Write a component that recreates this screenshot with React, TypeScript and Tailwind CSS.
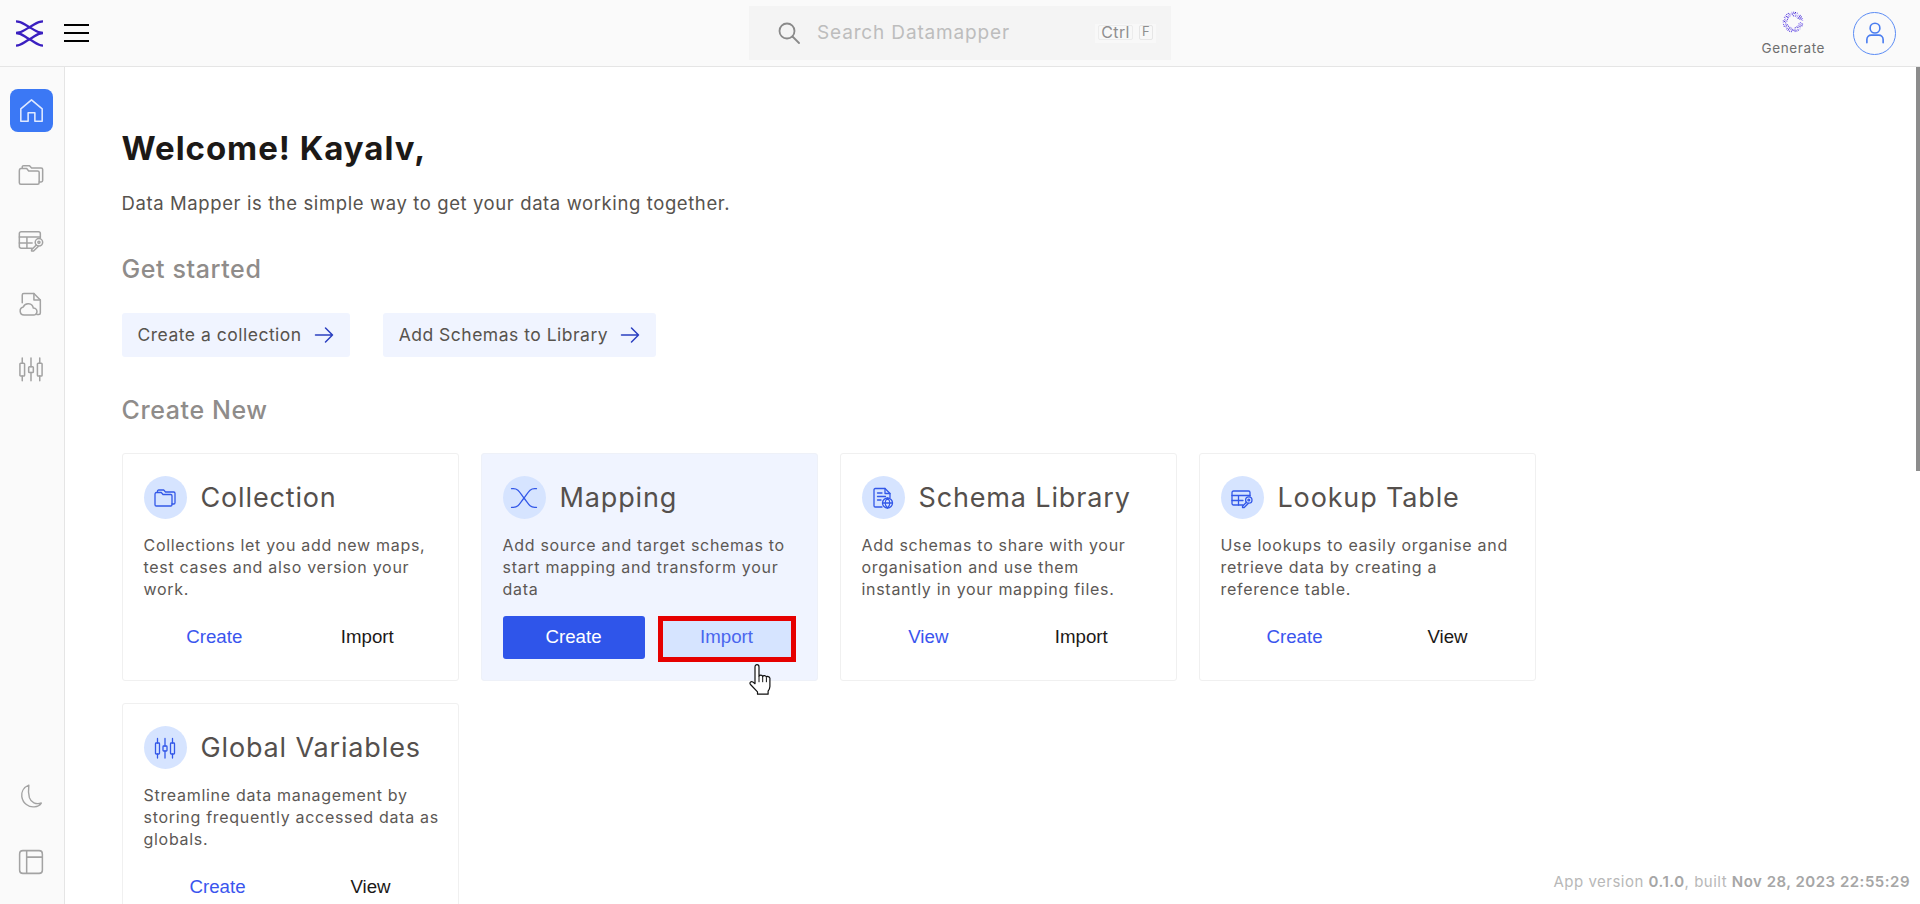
import type { ReactNode } from "react"

type IconProps = { className?: string }

function Svg({ className, children, sw = 1.3 }: IconProps & { children: ReactNode; sw?: number }) {
  return (
    <svg viewBox="0 0 24 24" fill="none" stroke="currentColor" strokeWidth={sw} strokeLinecap="round" strokeLinejoin="round" className={className} aria-hidden>
      {children}
    </svg>
  )
}

const FolderIcon = ({ className }: IconProps) => (
  <Svg className={className}>
    <path d="M2 8.500v10.200c0 .7.5 1.300 1.300 1.300h14.400c.8 0 1.300-.6 1.300-1.300V9.700c0-.7-.5-1.200-1.300-1.200H10L8.300 6.500H3.300C2.500 6.500 2 7.300 2 8.500Z" />
    <path d="M4.500 6.300V5.200c0-.7.5-1.200 1.200-1.200h5l1.800 2h8.200c.8 0 1.300.5 1.300 1.200v9.600c0 .7-.5 1.200-1.300 1.200H19" />
  </Svg>
)

const TableKeyIcon = ({ className }: IconProps) => (
  <Svg className={className}>
    <path d="M13 19H3.500C2.700 19 2 18.300 2 17.500v-11C2 5.700 2.700 5 3.500 5h15c.8 0 1.500.7 1.500 1.500V10" />
    <path d="M2 9.500h18M2 14.500h11M8.500 9.500V19" />
    <circle cx="18.800" cy="14" r="3.200" />
    <circle cx="18.800" cy="14" r="0.900" />
    <path d="M16.500 16.300 12.500 20.300v1.200h1.700l4-4" />
  </Svg>
)

const FileCloudIcon = ({ className }: IconProps) => (
  <Svg className={className}>
    <path d="M4.500 11V4.300C4.500 3.500 5 3 5.800 3h8.700l5.500 5.500v11.200c0 .8-.5 1.300-1.300 1.300H17" />
    <path d="M14.500 3v5.500H20" />
    <path d="M6.500 21.500H6a3.500 3.500 0 0 1-.6-6.900 4.500 4.500 0 0 1 8.600.9 3 3 0 0 1 .2 6H6.500Z" />
  </Svg>
)

const SlidersIcon = ({ className }: IconProps) => (
  <Svg className={className}>
    <rect x="2.500" y="7" width="4" height="11" rx="0.700" />
    <path d="M4.500 2.500V7M4.500 18v4" />
    <rect x="10" y="10" width="4" height="5" rx="0.700" />
    <path d="M12 2.500V10M12 15v7" />
    <rect x="17.500" y="7" width="4" height="11" rx="0.700" />
    <path d="M19.500 2.500V7M19.500 18v4" />
  </Svg>
)

const MappingIcon = ({ className }: IconProps) => (
  <Svg className={className} sw={1}>
    <path d="M2 4.500h1.500c4 0 5 3 8.500 7.500s4.500 7.500 8.500 7.500H22" />
    <path d="M2 19.500h1.500c4 0 5-3 8.500-7.500s4.500-7.500 8.500-7.500H22" />
  </Svg>
)

const SchemaIcon = ({ className }: IconProps) => (
  <Svg className={className}>
    <path d="M11 21H4.300C3.500 21 3 20.500 3 19.700V3.800C3 3 3.500 2.500 4.300 2.500h9.700l5 5v4" />
    <path d="M14 2.500v5h5M6.500 7h4.500M6.500 10.500h8M6.500 14h3.500" />
    <circle cx="16.500" cy="17" r="5" />
    <path d="M11.500 17h10M16.500 12c-3 3-3 7 0 10M16.500 12c3 3 3 7 0 10" />
  </Svg>
)

const dotColors = ["#3a22d0", "#6a4cf0", "#a999f5", "#5136e0"]

// Rings of small squares, every fifth one left out, so it reads as the speckled loader.
function GenerateIcon() {
  const dots = [6.200, 7.400, 8.600, 9.800].flatMap((r, ring) =>
    Array.from({ length: Math.round(r * 3.400) }, (_, i) => {
      const a = ((i + ring * 0.370) / Math.round(r * 3.400)) * Math.PI * 2
      return { key: `${ring}-${i}`, x: 10.500 + r * Math.cos(a), y: 10.500 + r * Math.sin(a), skip: (i + ring) % 5 === 0, fill: dotColors[(i + ring) % 4] }
    }),
  )
  return (
    <svg viewBox="0 0 22 22" className="h-[22px] w-[22px]" aria-hidden>
      {dots
        .filter((d) => !d.skip)
        .map((d) => (
          <rect key={d.key} x={d.x} y={d.y} width="1" height="1" fill={d.fill} />
        ))}
    </svg>
  )
}

function HandCursor() {
  return (
    <svg viewBox="0 0 28 34" className="absolute left-[85px] top-[41px] h-[35px] w-[28px]" aria-hidden>
      <path
        d="M9 2.200c1.300 0 2 1 2 2.200v9.300c.2-1.300 3.400-1.500 3.700.4.400-1.500 3.400-1.400 3.700.6.600-1.200 3.300-.9 3.500 1.100v8.200c0 2-.8 3.200-1.800 4.700v3H9.500v-2.300L2.500 22c-1.400-1.600.5-3.800 2.300-2.600l2.200 1.800V4.400C7 3.200 7.700 2.200 9 2.200Z"
        fill="#fff"
        stroke="#111"
        strokeWidth="1.200"
        strokeLinejoin="round"
      />
      <path d="M11 13.700v6M14.700 14.100v5.600M18.400 15.100v4.600" stroke="#111" strokeWidth="1" fill="none" />
    </svg>
  )
}

type Card = {
  title: string
  lines: string[]
  icon: ReactNode
  first: string
  second: string
  active?: boolean
}

const cardIcon = "h-[24px] w-[24px]"

const cards: Card[] = [
  {
    title: "Collection",
    lines: ["Collections let you add new maps,", "test cases and also version your", "work."],
    icon: <FolderIcon className={cardIcon} />,
    first: "Create",
    second: "Import",
  },
  {
    title: "Mapping",
    lines: ["Add source and target schemas to", "start mapping and transform your", "data"],
    icon: <MappingIcon className="h-[30px] w-[30px]" />,
    first: "Create",
    second: "Import",
    active: true,
  },
  {
    title: "Schema Library",
    lines: ["Add schemas to share with your", "organisation and use them", "instantly in your mapping files."],
    icon: <SchemaIcon className={cardIcon} />,
    first: "View",
    second: "Import",
  },
  {
    title: "Lookup Table",
    lines: ["Use lookups to easily organise and", "retrieve data by creating a", "reference table."],
    icon: <TableKeyIcon className={cardIcon} />,
    first: "Create",
    second: "View",
  },
  {
    title: "Global Variables",
    lines: ["Streamline data management by", "storing frequently accessed data as", "globals."],
    icon: <SlidersIcon className={cardIcon} />,
    first: "Create",
    second: "View",
  },
]

function FeatureCard({ card }: { card: Card }) {
  return (
    <div className={`rounded-[3px] border px-[21px] pb-[21px] pt-[22px] ${card.active ? "border-[#eef1f8] bg-[#f0f4ff]" : "border-[#f0f0f0] bg-white"}`}>
      <div className="flex items-center gap-[14px]">
        <span className="flex h-[43px] w-[43px] shrink-0 items-center justify-center rounded-full bg-[#d6e4ff] text-[#3358e8]">{card.icon}</span>
        <span className="text-[27px] leading-[43px] tracking-[0.85px] text-[#55504d]">{card.title}</span>
      </div>
      <p className="mt-[15px] whitespace-nowrap text-[16px] leading-[22px] tracking-[0.7px] text-[#5c5855]">
        {card.lines.map((l) => (
          <span key={l} className="block">{l}</span>
        ))}
      </p>
      <div className="mt-[16px] flex items-start gap-[13px] font-['Liberation_Sans',sans-serif] text-[18.700px]">
        {card.active ? (
          <>
            <span className="flex h-[43px] w-[142px] items-center justify-center rounded-[3px] bg-[#2f55ea] text-white">{card.first}</span>
            <span className="relative -mb-[3px] flex h-[46px] w-[138px] items-center justify-center border-[5px] border-[#e60000] bg-[#d6e4ff] pb-[3px] text-[#4a66ee]">
              {card.second}
              <HandCursor />
            </span>
          </>
        ) : (
          <>
            <span className="flex h-[43px] flex-auto items-center justify-center text-[#3a55ee]">{card.first}</span>
            <span className="flex h-[43px] flex-auto items-center justify-center text-[#1c1917]">{card.second}</span>
          </>
        )}
      </div>
    </div>
  )
}

function QuickAction({ label }: { label: string }) {
  return (
    <span className="flex h-[44px] items-center gap-[12px] rounded-[3px] bg-[#f0f4ff] px-[16px] text-[17.500px] tracking-[0.5px] text-[#57534e]">
      {label}
      <svg viewBox="0 0 20 20" fill="none" stroke="#2a3fc0" strokeWidth="1.500" strokeLinecap="round" strokeLinejoin="round" className="h-[20px] w-[20px]" aria-hidden>
        <path d="M1.500 10h17M11.500 3l7 7-7 7" />
      </svg>
    </span>
  )
}

const railIcon = "h-[28px] w-[28px] text-[#a3a3a3]"

export default function App() {
  return (
    <div className="relative flex h-[904px] flex-col overflow-hidden bg-white font-['Inter',sans-serif]">
      <header className="flex h-[67px] shrink-0 items-center border-b border-[#e5e5e5] bg-[#fafafa]">
        <div className="flex w-[640px] items-center pl-[16px]">
          <svg viewBox="0 0 28 28" className="h-[27px] w-[27px]" fill="none" stroke="#3a1fc0" strokeWidth="2.400" aria-hidden>
            <path d="M0 1.500C6 1.500 8 4.500 14 7.500S22 13.500 28 13.500C22 13.500 20 17 14 20S6 26.500 0 26.500" />
            <path d="M28 1.500C22 1.500 20 4.500 14 7.500S6 13.500 0 13.500C6 13.500 8 17 14 20S22 26.500 28 26.500" />
          </svg>
          <div className="ml-[21px] flex w-[25px] flex-col gap-[6px]">
            <span className="h-[2px] bg-black" />
            <span className="h-[2px] bg-black" />
            <span className="h-[2px] bg-black" />
          </div>
        </div>
        <div className="ml-[109px] flex h-[54px] w-[422px] items-center bg-[#f4f4f4] pl-[29px] pr-[15px]">
          <svg viewBox="0 0 22 22" fill="none" stroke="#8a8a8a" strokeWidth="1.800" strokeLinecap="round" className="h-[22px] w-[22px]" aria-hidden>
            <circle cx="9" cy="9" r="7.500" />
            <path d="m14.500 14.500 6.500 6.500" />
          </svg>
          <span className="ml-[17px] text-[19px] tracking-[0.85px] text-[#bdbdbd]">Search Datamapper</span>
          <span className="ml-auto flex items-center gap-[6px] bg-[#f8f8f8] px-[3px] pb-[3px] pt-[1px] tracking-[0.3px] text-[#8f8f8f]">
            <span className="flex h-[15px] w-[35px] items-center justify-center rounded-[2px] border border-[#ececec] text-[16px]">Ctrl</span>
            <span className="flex h-[15px] w-[14px] items-center justify-center rounded-[2px] border border-[#e6e6e6] text-[13px]">F</span>
          </span>
        </div>
        <div className="ml-auto flex items-center pr-[24px]">
          <div className="flex flex-col items-center">
            <GenerateIcon />
            <span className="mt-[7px] text-[13.500px] leading-[16px] tracking-[0.6px] text-[#6f6f6f]">Generate</span>
          </div>
          <span className="ml-[28px] flex h-[43px] w-[43px] items-center justify-center rounded-full border-[1.500px] border-[#5b8cf5]">
            <svg viewBox="0 0 24 24" fill="none" stroke="#4a7df0" strokeWidth="1.500" strokeLinecap="round" className="h-[26px] w-[26px]" aria-hidden>
              <circle cx="12" cy="7.500" r="4.500" />
              <path d="M4.500 21v-3c0-2.500 2-4 4-4h7c2 0 4 1.500 4 4v3" />
            </svg>
          </span>
        </div>
      </header>

      <div className="flex min-h-0 flex-1">
        <aside className="flex w-[65px] shrink-0 flex-col items-center border-r border-[#e5e5e5] bg-[#fafafa] pb-[29px] pr-[2px] pt-[22px]">
          <span className="flex h-[43px] w-[43px] items-center justify-center rounded-[8px] bg-[#3b78f5]">
            <svg viewBox="0 0 24 24" fill="none" stroke="#dfe9ff" strokeWidth="1.400" strokeLinejoin="round" className="h-[27px] w-[27px]" aria-hidden>
              <path d="M2.500 10.500 12 2.500l9.500 8v11H15v-7.500H9V21.500H2.500v-11Z" />
            </svg>
          </span>
          <div className="mt-[29px] flex flex-col items-center gap-[36.500px]">
            <FolderIcon className={railIcon} />
            <TableKeyIcon className={railIcon} />
            <FileCloudIcon className={railIcon} />
            <SlidersIcon className={railIcon} />
          </div>
          <div className="mt-auto flex flex-col items-center gap-[40px]">
            <svg viewBox="0 0 24 24" fill="none" stroke="#a3a3a3" strokeWidth="1.300" strokeLinejoin="round" className="h-[26px] w-[26px]" aria-hidden>
              <path d="M10 2C5 4 3 8.500 3.500 12.500 4.500 19 10 22.500 15 22c3.500-.3 5.500-1.800 6.500-3.500-5 1.500-9.500-.5-11-5C9.500 10 9.500 6 10 2Z" />
            </svg>
            <svg viewBox="0 0 24 24" fill="none" stroke="#a3a3a3" strokeWidth="1.400" className="h-[26px] w-[26px]" aria-hidden>
              <rect x="1.500" y="1.500" width="21" height="21" rx="3" />
              <path d="M8 1.500v21M8 7.500h14.500" />
            </svg>
          </div>
        </aside>

        <main className="min-w-0 flex-1 overflow-hidden pl-[56.500px] pt-[61px]">
          <h1 className="text-[33px] font-bold leading-[40px] tracking-[0.95px] text-[#1c1917]">Welcome! Kayalv,</h1>
          <p className="mt-[22px] text-[18.500px] leading-[26px] tracking-[0.6px] text-[#57534e]">Data Mapper is the simple way to get your data working together.</p>
          <h2 className="mt-[37px] text-[25px] font-medium leading-[32px] tracking-[0.6px] text-[#8f8c8a]">Get started</h2>
          <div className="mt-[28px] flex gap-[33px]">
            <QuickAction label="Create a collection" />
            <QuickAction label="Add Schemas to Library" />
          </div>
          <h2 className="mt-[37px] text-[25px] font-medium leading-[32px] tracking-[0.6px] text-[#8f8c8a]">Create New</h2>
          <div className="mt-[27px] grid grid-cols-[repeat(4,337px)] gap-x-[22px] gap-y-[22px]">
            {cards.map((c) => (
              <FeatureCard key={c.title} card={c} />
            ))}
          </div>
        </main>

        <div className="w-[4px] shrink-0 bg-white">
          <div className="h-[404px] bg-[#8c8c8c]" />
        </div>
      </div>

      <span className="absolute bottom-[12px] right-[10px] text-[15px] leading-[20px] tracking-[0.5px] text-[#b8b8b8]">
        App version <b className="font-semibold text-[#a6a6a6]">0.1.0</b>, built <b className="font-semibold text-[#a6a6a6]">Nov 28, 2023 22:55:29</b>
      </span>
    </div>
  )
}
